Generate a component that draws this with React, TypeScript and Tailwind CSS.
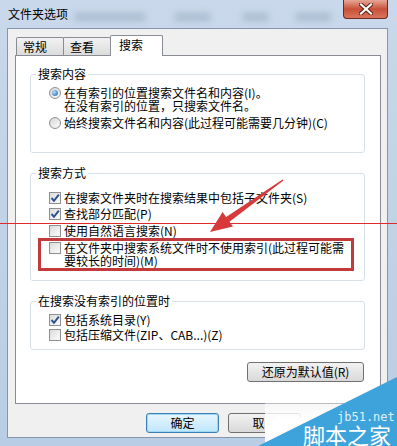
import type { ReactNode } from "react";

const font = "font-['Noto_Sans_CJK_SC','Noto_Sans',sans-serif]";

const Check = ({ checked }: { checked?: boolean }) => (
  <span className="mt-[1px] w-[12px] h-[12px] shrink-0 border border-[#8e8f8f] bg-gradient-to-br from-[#dcdcdc] to-[#fbfbfb] flex items-center justify-center">
    {checked && (
      <svg width="10" height="10" viewBox="0 0 10 10">
        <path d="M1.5 5 L4 7.8 L8.8 1.6" fill="none" stroke="#2b4f8e" strokeWidth="1.9" />
      </svg>
    )}
  </span>
);

const Radio = ({ checked }: { checked?: boolean }) => (
  <span className="mt-[1px] w-[12px] h-[12px] shrink-0 rounded-full border border-[#8e8f8f] bg-gradient-to-br from-[#d6d6d6] to-[#fdfdfd] flex items-center justify-center">
    {checked && (
      <span className="w-[6px] h-[6px] rounded-full bg-[radial-gradient(circle_at_35%_35%,#b4dcfb,#1a5fb0)]" />
    )}
  </span>
);

const Group = ({ label, className, children }: { label: string; className: string; children: ReactNode }) => (
  <div className={`relative ml-[14px] w-[335px] border border-[#d5dfe5] rounded-[3px] ${className}`}>
    <span className="absolute -top-[8px] left-[5px] bg-white px-[2px] leading-[14px]">{label}</span>
    {children}
  </div>
);

const Row = ({ children, className = "" }: { children: ReactNode; className?: string }) => (
  <div className={`flex items-start gap-[3px] pl-[18px] leading-[13px] ${className}`}>{children}</div>
);

const Tab = ({ label, active }: { label: string; active?: boolean }) =>
  active ? (
    <div className="relative z-10 -mb-[1px] -ml-[1px] h-[21px] w-[53px] border border-b-0 border-[#898c95] bg-white rounded-t-[2px] pl-[8px] pt-[2px] leading-[14px]">
      {label}
    </div>
  ) : (
    <div className="h-[18px] w-[48px] border border-b-0 border-[#898c95] bg-gradient-to-b from-[#f2f2f2] to-[#dcdcdc] rounded-t-[2px] pl-[6px] pt-[2px] leading-[14px] -ml-[1px] first:ml-0">
      {label}
    </div>
  );

export default function App() {
  return (
    <div className={`${font} relative w-[397px] h-[446px] overflow-hidden text-[12px] text-black bg-gradient-to-b from-[#c9d8ea] to-[#b9cde4]`}>
      {/* title bar */}
      <div className="relative h-[28px] flex items-center pl-[8px]">
        <span className="absolute left-[75px] top-[13px] w-[70px] h-[8px] bg-[#8ea2ba]/50 blur-[3px]" />
        <span className="absolute left-[175px] top-[13px] w-[35px] h-[8px] bg-[#8ea2ba]/50 blur-[3px]" />
        <span className="absolute left-[243px] top-[13px] w-[25px] h-[8px] bg-[#8ea2ba]/50 blur-[3px]" />
        <span className="absolute left-[296px] top-[13px] w-[35px] h-[8px] bg-[#8ea2ba]/50 blur-[3px]" />
        <span className="relative leading-[14px]">文件夹选项</span>
        <div className="absolute right-[9px] top-0 w-[45px] h-[19px] rounded-b-[4px] border border-t-0 border-[#6b2b20] bg-gradient-to-b from-[#e5a696] via-[#c9503a] to-[#d9745c] flex items-center justify-center">
          <svg width="14" height="12" viewBox="0 0 14 12">
            <path d="M2 1.5 L12 10.5 M12 1.5 L2 10.5" stroke="#5a1a10" strokeWidth="4" strokeLinecap="square" />
            <path d="M2 1.5 L12 10.5 M12 1.5 L2 10.5" stroke="#ffffff" strokeWidth="2.2" strokeLinecap="square" />
          </svg>
        </div>
      </div>

      {/* frame + body */}
      <div className="pl-[7px] pr-[9px]">
        <div className="h-[410px] border border-[#8396ae] bg-[#f0f0f0] pl-[7px] pt-[6px]">
          {/* tabs */}
          <div className="flex items-end h-[20px] pl-[1px]">
            <Tab label="常规" />
            <Tab label="查看" />
            <Tab label="搜索" active />
          </div>

          {/* panel */}
          <div className="w-[366px] h-[349px] border border-[#898c95] bg-white">
            <Group label="搜索内容" className="mt-[18px] h-[79px] pt-[11px]">
              <Row>
                <Radio checked />
                <span>
                  在有索引的位置搜索文件名和内容(I)。
                  <br />
                  在没有索引的位置，只搜索文件名。
                </span>
              </Row>
              <Row className="mt-[4px]">
                <Radio />
                <span>始终搜索文件名和内容(此过程可能需要几分钟)(C)</span>
              </Row>
            </Group>

            <Group label="搜索方式" className="mt-[20px] h-[108px] pt-[17px]">
              <Row>
                <Check checked />
                <span>在搜索文件夹时在搜索结果中包括子文件夹(S)</span>
              </Row>
              <Row className="mt-[3px]">
                <Check checked />
                <span>查找部分匹配(P)</span>
              </Row>
              <Row className="mt-[4px]">
                <Check />
                <span>使用自然语言搜索(N)</span>
              </Row>
              <Row className="mt-[4px]">
                <Check />
                <span>
                  在文件夹中搜索系统文件时不使用索引(此过程可能需
                  <br />
                  要较长的时间)(M)
                </span>
              </Row>
            </Group>

            <Group label="在搜索没有索引的位置时" className="mt-[20px] h-[49px] pt-[11px]">
              <Row>
                <Check checked />
                <span>包括系统目录(Y)</span>
              </Row>
              <Row className="mt-[2px]">
                <Check />
                <span>包括压缩文件(ZIP、CAB...)(Z)</span>
              </Row>
            </Group>

            <div className="mt-[12px] ml-[231px] w-[117px] h-[20px] border border-[#707070] rounded-[3px] bg-gradient-to-b from-[#f2f2f2] to-[#d9d9d9] flex items-center justify-center leading-[14px]">
              还原为默认值(R)
            </div>
          </div>

          {/* bottom buttons */}
          <div className="flex gap-[9px] mt-[9px] ml-[131px]">
            <div className="w-[73px] h-[20px] rounded-[3px] border border-[#3c7fb1] bg-gradient-to-b from-[#e8f6fd] to-[#bee6fd] shadow-[0_0_0_1px_#9fd8f7_inset] flex items-center justify-center leading-[14px]">
              确定
            </div>
            <div className="w-[73px] h-[20px] rounded-[3px] border border-[#707070] bg-gradient-to-b from-[#f2f2f2] to-[#d9d9d9] flex items-center justify-center leading-[14px]">
              取消
            </div>
          </div>
        </div>
      </div>

      {/* annotations */}
      <div className="absolute left-0 top-[223px] w-full h-[1px] bg-[#e0292b]" />
      <div className="absolute left-[38px] top-[238px] w-[316px] h-[33px] border-[3px] border-[#c23a3c]" />
      <svg className="absolute left-0 top-0 pointer-events-none" width="397" height="446" viewBox="0 0 397 446">
        <polygon
          points="283.4,180.6 229.5,221.7 233,226.6 210,232 222.6,212 226.1,216.9 282.6,179.4"
          fill="#d8393a"
        />
      </svg>

      {/* watermark */}
      <div className="absolute left-[265px] top-[392px] right-0 bottom-0 bg-gradient-to-b from-white/0 via-white to-white" />
      <svg className="absolute left-0 top-0 pointer-events-none" width="397" height="446" viewBox="0 0 397 446">
        <polygon points="397,377 397,446 258,446" fill="#3ea3da" />
      </svg>
      <span className="absolute left-[337px] top-[411px] font-['DejaVu_Sans_Mono',monospace] text-[12px] leading-[12px] text-[#dff1fb]">
        jb51.net
      </span>
      <span className="absolute left-[303px] top-[423px] text-[22px] leading-[22px] text-white">脚本之家</span>
    </div>
  );
}
